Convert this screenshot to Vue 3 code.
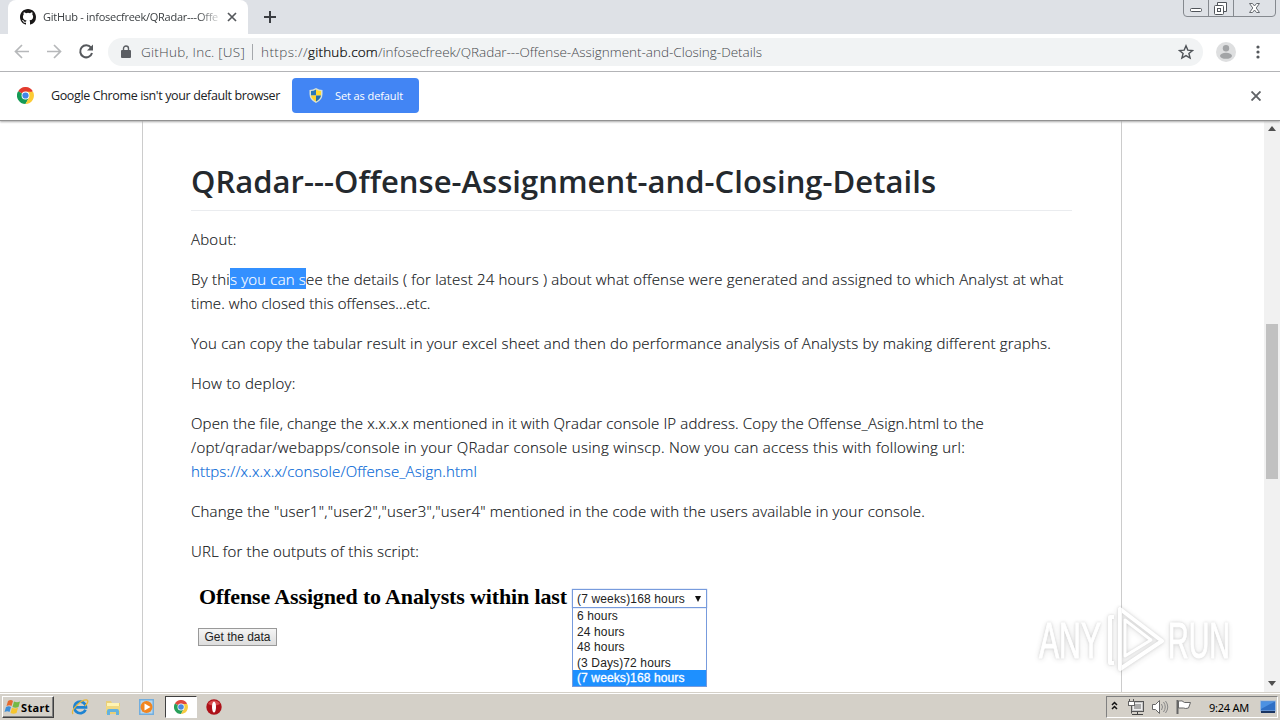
<script setup>
const vFit = {
  // Spread the glyphs so the text run takes the given width
  mounted(el, { value }) {
    const natural = el.getBoundingClientRect().width
    const count = el.textContent.length
    el.style.letterSpacing = `${(value - natural) / count}px`
  }
}

const paragraphs = [
  [[{ text: 'About:', width: 45.5 }]],
  [
    [
      { text: 'By thi', width: 39 },
      { text: 's you can s', width: 76, type: 'selected' },
      { text: 'ee the details ( for latest 24 hours ) about what offense were generated and assigned to which Analyst at what', width: 757.5 }
    ],
    [{ text: 'time. who closed this offenses...etc.', width: 239.5 }]
  ],
  [[{ text: 'You can copy the tabular result in your excel sheet and then do performance analysis of Analysts by making different graphs.', width: 860 }]],
  [[{ text: 'How to deploy:', width: 104.5 }]],
  [
    [{ text: 'Open the file, change the x.x.x.x mentioned in it with Qradar console IP address. Copy the Offense_Asign.html to the', width: 793 }],
    [{ text: '/opt/qradar/webapps/console in your QRadar console using winscp. Now you can access this with following url:', width: 774 }],
    [{ text: 'https://x.x.x.x/console/Offense_Asign.html', width: 286 }].map((run) => ({ ...run, type: 'link' }))
  ],
  [[{ text: 'Change the "user1","user2","user3","user4" mentioned in the code with the users available in your console.', width: 734 }]],
  [[{ text: 'URL for the outputs of this script:', width: 228 }]]
]

const options = ['6 hours', '24 hours', '48 hours', '(3 Days)72 hours', '(7 weeks)168 hours']
</script>

<template>
  <div class="desktop">
    <header class="tab-strip">
      <div class="tab">
        <svg class="github" width="16" height="16" viewBox="0 0 16 16">
          <path fill="#191717" d="M8 0C3.58 0 0 3.58 0 8c0 3.54 2.29 6.53 5.47 7.59.4.07.55-.17.55-.38 0-.19-.01-.82-.01-1.49-2.01.37-2.53-.49-2.69-.94-.09-.23-.48-.94-.82-1.13-.28-.15-.68-.52-.01-.53.63-.01 1.08.58 1.23.82.72 1.21 1.87.87 2.33.66.07-.52.28-.87.51-1.07-1.78-.2-3.64-.89-3.64-3.95 0-.87.31-1.59.82-2.15-.08-.2-.36-1.02.08-2.12 0 0 .67-.21 2.2.82a7.6 7.6 0 0 1 4 0c1.53-1.04 2.2-.82 2.2-.82.44 1.1.16 1.92.08 2.12.51.56.82 1.27.82 2.15 0 3.07-1.87 3.75-3.65 3.95.29.25.54.73.54 1.48 0 1.07-.01 1.93-.01 2.2 0 .21.15.46.55.38A8.01 8.01 0 0 0 16 8c0-4.42-3.58-8-8-8z" />
        </svg>
        <div class="tab-title"><span v-fit="175">GitHub - infosecfreek/QRadar---Offe</span></div>
        <svg class="tab-close" width="10" height="10" viewBox="0 0 10 10"><path d="M1 1l8 8M9 1L1 9" stroke="#55585c" stroke-width="1.7" /></svg>
      </div>
      <svg class="new-tab" width="12" height="12" viewBox="0 0 12 12"><path d="M6 0v12M0 6h12" stroke="#3a3d42" stroke-width="2" /></svg>
      <div class="window-buttons">
        <svg width="94" height="18" viewBox="0 0 94 18" fill="none" stroke="#74777c">
          <path d="M.5 0v13q0 3.500 3.500 3.500H89q3.500 0 3.500-3.500V0M25.500 0v16M50.500 0v16" stroke="#85898f" />
          <rect x="7.500" y="8.500" width="11" height="3" rx="1" fill="#fff" stroke="#50545a" />
          <path d="M34.500 5.500v-3h9v9h-3" stroke="#50545a" fill="#fff" />
          <rect x="31.500" y="5.500" width="9" height="9" rx="1" fill="#fff" stroke="#50545a" />
          <rect x="34.500" y="8.500" width="3" height="3" stroke="#50545a" />
          <path d="M66.500 3.500h3l2 2.500 2-2.500h3l-3.300 4.500 3.300 4.500h-3l-2-2.500-2 2.500h-3l3.300-4.500z" fill="#fff" stroke="#666a70" />
        </svg>
      </div>
    </header>

    <div class="toolbar">
      <svg width="94" height="36" viewBox="0 0 94 36" fill="none">
        <g stroke="#b6b8ba" stroke-width="1.700">
          <path d="M29 17.500H16M22 11l-6.500 6.500L22 24" />
          <path d="M47 17.500h13M54 11l6.500 6.500L54 24" />
        </g>
        <path d="M91 13.700A6 6 0 1 0 92 19" stroke="#56595d" stroke-width="2" />
        <path d="M93 10.500v6h-6z" fill="#56595d" />
      </svg>
      <div class="omnibox">
        <svg width="10" height="14" viewBox="0 0 10 14">
          <rect y="5" width="10" height="8" rx="1" fill="#5b5e63" />
          <path d="M2.500 6V3.500a2.500 2.500 0 0 1 5 0V6" fill="none" stroke="#5b5e63" stroke-width="1.400" />
        </svg>
        <span class="owner"><span v-fit="104">GitHub, Inc. [US]</span></span>
        <span class="divider"></span>
        <span class="url"><span v-fit="47">https://</span><span v-fit="70" class="host">github.com</span><span v-fit="384">/infosecfreek/QRadar---Offense-Assignment-and-Closing-Details</span></span>
        <svg class="star" width="16" height="16" viewBox="0 0 16 16"><path d="M8 1.800l1.800 4.300 4.700.4-3.600 3 1.200 4.500L8 11.600 3.900 14l1.200-4.500-3.600-3 4.700-.4z" fill="none" stroke="#4f5358" stroke-width="1.400" /></svg>
      </div>
      <svg class="avatar" width="20" height="20" viewBox="0 0 20 20">
        <circle cx="10" cy="10" r="10" fill="#dedfe0" /><circle cx="10" cy="6.300" r="3.200" fill="#a2a4a6" /><ellipse cx="10" cy="13.800" rx="6" ry="3" fill="#a2a4a6" />
      </svg>
      <svg class="menu" width="4" height="14" viewBox="0 0 4 14" fill="#55585c"><circle cx="2" cy="2" r="1.600" /><circle cx="2" cy="7" r="1.600" /><circle cx="2" cy="12" r="1.600" /></svg>
    </div>

    <div class="infobar">
      <svg class="chrome-icon" width="17" height="17" viewBox="0 0 18 18">
        <path d="M9 9L1.200 4.500A9 9 0 0 1 16.800 4.500z" fill="#e33b2e" />
        <path d="M9 9L1.200 4.500A9 9 0 0 0 9 18l3.500-6z" fill="#159a55" />
        <path d="M9 5h8a9 9 0 0 1-8 13l3.800-7z" fill="#fccb35" />
        <circle cx="9" cy="9" r="4.200" fill="#fff" /><circle cx="9" cy="9" r="3.300" fill="#4285e8" />
      </svg>
      <span class="info-text"><span v-fit="229">Google Chrome isn't your default browser</span></span>
      <button class="default-button">
        <svg width="14" height="15" viewBox="0 0 14 15">
          <path d="M7 0Q10 2 13.500 2V6q0 6-6.500 9Q.5 12 .5 6V2Q4 2 7 0z" fill="#d9e2d5" />
          <path d="M7 1.500Q4.500 3 2 3v4.500h5z" fill="#2877b9" /><path d="M7 1.500Q9.500 3 12 3v4.500H7z" fill="#ffda31" />
          <path d="M2 7.500h5v6Q2.500 11 2 7.500z" fill="#ffd42a" /><path d="M12 7.500H7v6q4.500-2.500 5-6z" fill="#246fac" />
        </svg>
        <span v-fit="68">Set as default</span>
      </button>
      <svg class="info-close" width="10" height="10" viewBox="0 0 10 10"><path d="M.5.5l9 9M9.500.5l-9 9" stroke="#606367" stroke-width="1.900" /></svg>
    </div>

    <main class="viewport">
      <article class="readme">
        <h1><span v-fit="745">QRadar---Offense-Assignment-and-Closing-Details</span></h1>
        <p v-for="(lines, i) in paragraphs" :key="i">
          <span v-for="(line, j) in lines" :key="j" class="line"><span v-for="run in line" :key="run.text" v-fit="run.width" class="run" :class="run.type">{{ run.text }}</span></span>
        </p>
        <section class="output">
          <div class="output-form">
            <h2><span v-fit="368">Offense Assigned to Analysts within last</span></h2>
            <button class="get-data"><span v-fit="66">Get the data</span></button>
          </div>
          <div class="select">
            <div class="select-value"><span v-fit="108">{{ options[4] }}</span><i></i></div>
            <ul>
              <li v-for="(option, i) in options" :key="option" :class="{ active: i === 4 }">{{ option }}</li>
            </ul>
          </div>
        </section>
      </article>
      <aside class="scrollbar">
        <i class="arrow-up"></i>
        <div class="thumb"></div>
        <i class="arrow-down"></i>
      </aside>
    </main>

    <svg class="watermark" width="206" height="76" viewBox="0 0 206 76">
      <text x="5" y="56" textLength="62" lengthAdjust="spacingAndGlyphs">ANY</text>
      <text x="134" y="56" textLength="62" lengthAdjust="spacingAndGlyphs">RUN</text>
      <g fill="none" stroke="#fff" stroke-width="4" stroke-linejoin="round">
        <path d="M86 7v60l42-28z" />
        <path d="M91 18v36l26-16z" stroke-width="3" />
        <path d="M80 15h-4v46h4" />
      </g>
    </svg>

    <footer class="taskbar">
      <button class="start">
        <svg width="17" height="16" viewBox="0 0 17 16">
          <path d="M4 2q3-2 5 0L7.500 7q-2-1.500-5 0z" fill="#e56a2e" /><path d="M10 2.500q3 1.500 6 0L14.500 8q-3 1.500-6 0z" fill="#74b944" />
          <path d="M2 8q3-1.500 5 0l-1.500 5q-2-1.500-5 0z" fill="#3c8ed8" /><path d="M8 8.800q3 1.500 6 0L12.500 14q-3 1.500-6 0z" fill="#f6c52e" />
        </svg>
        <span v-fit="29">Start</span>
      </button>
      <nav class="launchers">
        <span><svg width="18" height="18" viewBox="0 0 18 18" fill="none">
          <path d="M14.500 11.800A5.800 5.800 0 1 1 15 9.300H5" stroke="#1d83d2" stroke-width="2.700" />
          <path d="M2 16C-1 12 11 1 16 2c2 1 0 4-2 6" stroke="#e8b73a" stroke-width="1.300" />
        </svg></span>
        <span><svg width="18" height="18" viewBox="0 0 18 18">
          <path d="M2 3h5l1 2h8v11H2z" fill="#e9cf78" /><path d="M3 5h12v5H3z" fill="#fff4b3" /><path d="M2 8h14v5H2z" fill="#f0d982" />
          <path d="M3 17v-4q0-2 2-2h8q2 0 2 2v4h-3v-3H6v3z" fill="#63b2df" />
        </svg></span>
        <span><svg width="18" height="18" viewBox="0 0 18 18">
          <rect x="1" y="1" width="15" height="16" fill="#72aede" /><rect x="2.500" y="2.500" width="12" height="13" fill="#b7d7ee" />
          <circle cx="8.500" cy="9" r="6" fill="#f18520" /><path d="M6.500 5.500v7l6-3.500z" fill="#fff" />
        </svg></span>
        <span class="pressed"><svg width="14" height="14" viewBox="0 0 18 18">
          <path d="M9 9L1.200 4.500A9 9 0 0 1 16.800 4.500z" fill="#df493d" /><path d="M9 9L1.200 4.500A9 9 0 0 0 9 18l3.500-6z" fill="#28a05a" />
          <path d="M9 5h8a9 9 0 0 1-8 13l3.800-7z" fill="#f7cb40" /><circle cx="9" cy="9" r="4.500" fill="#fff" /><circle cx="9" cy="9" r="3.600" fill="#4b89df" />
        </svg></span>
        <span class="opera"><svg width="16" height="16" viewBox="0 0 16 16">
          <circle cx="8" cy="8" r="7.700" fill="#ad1119" /><path d="M2 5a7 7 0 0 1 12 0Q8 8 2 5" fill="#d64a4c" /><ellipse cx="8" cy="8" rx="2" ry="5.500" fill="#fff" />
        </svg></span>
      </nav>
      <div class="tray">
        <svg width="88" height="20" viewBox="1 0 88 20" fill="none" stroke="#666">
          <path d="M6 8l2.500-2.500L11 8M6 12l2.500-2.500L11 12" stroke="#111" stroke-width="1.500" />
          <rect x="25.500" y="4.500" width="12" height="10" fill="#c8c8c8" stroke="#555" /><rect x="27.500" y="6.500" width="8" height="6" fill="#aaa" stroke="#eee" /><path d="M26 17.500h11M31.500 15v2" stroke="#444" />
          <path d="M23.500 2v3M27.500 2v3M25.500 9v7.500" stroke="#555" /><rect x="22.500" y="4.500" width="6" height="4" fill="#fff" />
          <path d="M46.500 7.500h3l4-4v13l-4-4h-3z" fill="#fff" /><path d="M55.500 7q2 3 0 6M57.500 5q3.500 5 0 10M59.500 4q4.500 6 0 12" stroke="#888" />
          <path d="M71.500 3v14" stroke-width="2" /><path d="M72.500 4q4-1 6 1.500h6L82.500 11q-3 1-5 0h-5z" fill="#fff" />
        </svg>
        <span class="clock"><span v-fit="40">9:24 AM</span></span>
        <svg width="16" height="14" viewBox="0 0 16 14"><rect x=".5" y="1" width="15" height="10" fill="#2f6fc5" stroke="#9ab8dd" /><path d="M1 1.500h14L1 9z" fill="#4c91e2" /><path d="M1 12h14" stroke="#1a3562" stroke-width="2" /></svg>
      </div>
    </footer>
  </div>
</template>

<style>
body {
  margin: 0;
  overflow: hidden;
}
</style>

<style scoped>
* {
  box-sizing: border-box;
}

.desktop {
  position: relative;
  width: 1280px;
  height: 720px;
  display: flex;
  flex-direction: column;
  background: #fff;
  overflow: hidden;
  font-family: "Open Sans", "Noto Sans", sans-serif;
  white-space: nowrap;
}

svg {
  display: block;
  flex: none;
}

span {
  display: inline-block;
}

/* Browser chrome */
.tab-strip {
  height: 34px;
  display: flex;
  background: #dee1e6;
  padding-left: 8px;
}

.tab {
  width: 240px;
  height: 34px;
  background: #fff;
  border-radius: 8px 8px 0 0;
  display: flex;
  align-items: center;
  padding-left: 12px;
}

.tab-title {
  width: 176px;
  margin-left: 7px;
  overflow: hidden;
  font-size: 11px;
  line-height: 18px;
  color: #3c4043;
  mask-image: linear-gradient(to right, #000 155px, transparent 180px);
}

.tab-close {
  margin-left: 8px;
}

.new-tab {
  margin: 11px 0 0 16px;
}

.window-buttons {
  margin-left: auto;
  margin-right: 3px;
}

.toolbar {
  height: 38px;
  display: flex;
  align-items: center;
  padding-bottom: 1px;
  border-bottom: 1px solid #b4b5b8;
}

.omnibox {
  width: 1095px;
  height: 28px;
  margin-left: 14px;
  padding-left: 13px;
  border-radius: 14px;
  background: #f1f3f4;
  display: flex;
  align-items: center;
  font-size: 13.5px;
  font-weight: 300;
  color: #46494d;
}

.owner {
  margin-left: 10px;
}

.divider {
  width: 1px;
  height: 16px;
  margin: 0 8px 0 7px;
  background: #a5a8ac;
}

.host {
  color: #000;
  -webkit-text-stroke: 0.2px #000;
}

.star {
  margin-left: auto;
  margin-right: 9px;
}

.avatar {
  margin-left: 13px;
}

.menu {
  margin-left: 20px;
}

.infobar {
  height: 49px;
  display: flex;
  align-items: center;
  padding: 0 19px 1px 17px;
  border-bottom: 1px solid #929292;
  box-shadow: 0 1px 2px #aaa;
  z-index: 1;
  background: #fff;
}

.info-text {
  margin-left: 17px;
  font-size: 12.5px;
  color: #202124;
}

.default-button {
  width: 127px;
  height: 35px;
  margin-left: 12px;
  padding: 0 0 0 17px;
  border: 0;
  border-radius: 4px;
  display: flex;
  align-items: center;
  gap: 12px;
  background: #4285f4;
  color: #fff;
  font: 11px "Open Sans", sans-serif;
}

.info-close {
  margin-left: auto;
}

/* Page */
.viewport {
  height: 571px;
  display: flex;
  overflow: hidden;
}

.readme {
  width: 980px;
  margin-left: 142px;
  padding: 37px 49px 0 48px;
  border: solid #ccc;
  border-width: 0 1px;
  color: #24292e;
}

h1 {
  height: 53px;
  margin: 0 0 17px;
  border-bottom: 1px solid #eaecef;
  font-size: 31px;
  line-height: 46px;
  font-weight: 600;
}

p {
  margin: 0 0 16px;
  font-size: 15px;
  line-height: 22px;
  font-weight: 300;
  color: #101316;
  -webkit-text-stroke: 0.15px;
}

.line {
  display: flex;
}

.run {
  height: 24px;
  white-space: pre;
}

.selected {
  height: 21px;
  background: #3390ff;
  color: #fff;
}

.link {
  color: #0366d6;
}

.output {
  display: flex;
  padding: 9px 0 0 7px;
}

.output-form {
  width: 374px;
}

h2 {
  height: 20px;
  margin: 0 0 19px 1px;
  font: bold 22px/15px "Liberation Serif", serif;
  color: #000;
}

.get-data {
  display: block;
  width: 79px;
  height: 18px;
  padding: 0;
  border: 1px solid #999;
  background: linear-gradient(#f5f5f5, #ddd);
  font: 12px/15px "Liberation Sans", sans-serif;
  color: #222;
}

.select {
  width: 135px;
  font: 12px/16px "Liberation Sans", sans-serif;
  color: #222;
}

.select-value {
  height: 19px;
  padding: 1px 5px 0 4px;
  display: flex;
  align-items: center;
  justify-content: space-between;
  border: 1px solid #779bdd;
  box-shadow: 0 0 1px #779bdd;
}

.select-value i {
  border: solid transparent;
  border-width: 6px 3.5px 0;
  border-top-color: #111;
}

ul {
  margin: 0;
  padding: 0;
  list-style: none;
  border: 1px solid #779bdd;
  border-top: 0;
}

li {
  height: 15.6px;
  padding-left: 4px;
  letter-spacing: 0.12px;
}

li.active {
  background: #1e90ff;
  color: #fff;
  -webkit-text-stroke: 0.3px #fff;
}

.scrollbar {
  width: 16px;
  margin-left: 142px;
  background: #f1f1f1;
  display: flex;
  flex-direction: column;
  align-items: center;
}

.arrow-up {
  margin-top: 5px;
  border: solid transparent;
  border-width: 0 4px 5px;
  border-bottom-color: #505050;
}

.thumb {
  width: 12px;
  height: 155px;
  margin-top: 193px;
  background: #c1c1c1;
}

.arrow-down {
  margin-top: auto;
  margin-bottom: 6px;
  border: solid transparent;
  border-width: 5px 4px 0;
  border-top-color: #505050;
}

.watermark {
  position: absolute;
  left: 1034px;
  top: 602px;
  z-index: 2;
  filter: drop-shadow(0 0 1.5px rgba(0, 0, 0, 0.16)) drop-shadow(0 1px 3px rgba(0, 0, 0, 0.14));
  opacity: 0.85;
  overflow: visible;
}

.watermark text {
  font: 50px "Liberation Sans", sans-serif;
  fill: #fff;
  stroke: #fff;
  stroke-width: 1px;
}

/* Taskbar */
.taskbar {
  height: 28px;
  display: flex;
  align-items: flex-start;
  padding: 4px 2px 0;
  background: linear-gradient(#d4d0c8 1px, #fff 1px, #fff 2px, #d4d0c8 2px);
}

.start {
  width: 52px;
  height: 22px;
  padding: 0 0 0 1px;
  display: flex;
  align-items: center;
  border: 1px solid;
  border-color: #fff #404040 #404040 #fff;
  box-shadow: inset -1px -1px #808080;
  background: #d4d0c8;
  font: bold 11px "Noto Sans", sans-serif;
  color: #000;
}

.launchers {
  display: flex;
  margin-left: 9px;
}

.launchers > span {
  width: 33.5px;
  height: 22px;
  display: flex;
  align-items: center;
  justify-content: center;
}

.launchers .pressed {
  width: 32px;
  margin-left: 1px;
  border: 1px solid;
  border-color: #404040 #fff #fff #404040;
  background: #fff;
}

.launchers .opera {
  margin-left: 1px;
}

.tray {
  width: 172px;
  height: 22px;
  margin-left: auto;
  display: flex;
  align-items: center;
  border: 1px solid;
  border-color: #808080 #fff #fff #808080;
}

.clock {
  margin: 0 11px 0 14px;
  font: 11px "Noto Sans", sans-serif;
  color: #000;
}
</style>
